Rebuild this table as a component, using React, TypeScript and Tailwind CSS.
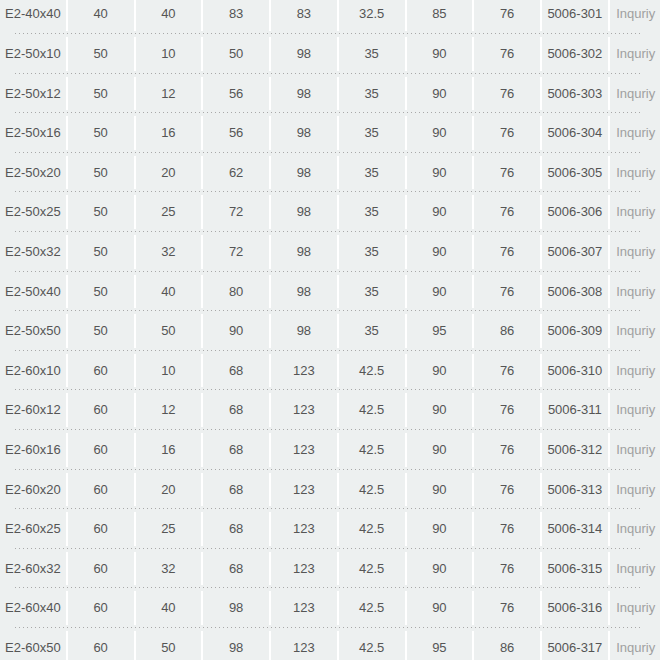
const rows: string[][] = [
  ["E2-40x40", "40", "40", "83", "83", "32.5", "85", "76", "5006-301"],
  ["E2-50x10", "50", "10", "50", "98", "35", "90", "76", "5006-302"],
  ["E2-50x12", "50", "12", "56", "98", "35", "90", "76", "5006-303"],
  ["E2-50x16", "50", "16", "56", "98", "35", "90", "76", "5006-304"],
  ["E2-50x20", "50", "20", "62", "98", "35", "90", "76", "5006-305"],
  ["E2-50x25", "50", "25", "72", "98", "35", "90", "76", "5006-306"],
  ["E2-50x32", "50", "32", "72", "98", "35", "90", "76", "5006-307"],
  ["E2-50x40", "50", "40", "80", "98", "35", "90", "76", "5006-308"],
  ["E2-50x50", "50", "50", "90", "98", "35", "95", "86", "5006-309"],
  ["E2-60x10", "60", "10", "68", "123", "42.5", "90", "76", "5006-310"],
  ["E2-60x12", "60", "12", "68", "123", "42.5", "90", "76", "5006-311"],
  ["E2-60x16", "60", "16", "68", "123", "42.5", "90", "76", "5006-312"],
  ["E2-60x20", "60", "20", "68", "123", "42.5", "90", "76", "5006-313"],
  ["E2-60x25", "60", "25", "68", "123", "42.5", "90", "76", "5006-314"],
  ["E2-60x32", "60", "32", "68", "123", "42.5", "90", "76", "5006-315"],
  ["E2-60x40", "60", "40", "98", "123", "42.5", "90", "76", "5006-316"],
  ["E2-60x50", "60", "50", "98", "123", "42.5", "95", "86", "5006-317"],
];

const Row = ({ cells }: { cells: string[] }) => {
  return (
    <div className="flex flex-col h-[39.6px] shrink-0">
      <div className="h-[3px]" />
      <div className="flex h-[33.6px]">
        {cells.map((c, i) => (
          <div
            key={i}
            className="w-[67.75px] shrink-0 flex items-center justify-center border-r-2 border-white text-[13px] text-[#555]"
          >
            {c}
          </div>
        ))}
        <div className="w-[52px] shrink-0 flex items-center justify-center text-[13px] text-[#a0a0a0]">
          Inquriy
        </div>
      </div>
      <div className="h-[2px]" />
      <div className="h-px ml-[15px] w-[628px] bg-[linear-gradient(to_right,#a8a8a8_1px,transparent_1px)] bg-[length:4px_1px] bg-repeat-x" />
    </div>
  );
};

const App = () => {
  return (
    <div className="w-[660px] h-[660px] overflow-hidden bg-[#edf0f0] font-['Liberation_Sans',Arial,sans-serif]">
      <div className="flex flex-col -mt-[5.6px]">
        {rows.map((r) => (
          <Row key={r[0]} cells={r} />
        ))}
      </div>
    </div>
  );
};

export default App;
